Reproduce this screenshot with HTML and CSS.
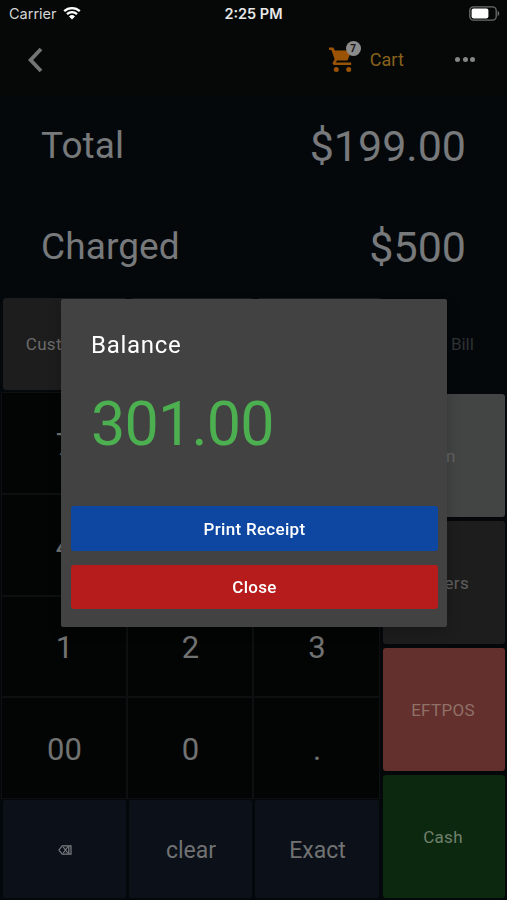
FILE: index.html
```
<!DOCTYPE html>
<html lang="en">
<head>
    <meta charset="UTF-8">
    <meta name="viewport" content="width=device-width, initial-scale=1.0">
    <title>Payment</title>
    <link rel="stylesheet" href="styles.css">
</head>
<body>

    <div class="status-bar">
        <div class="carrier">
            <span>Carrier</span>
            <svg class="wifi" viewBox="0 0 18 14" width="18" height="14">
                <path d="M1.2 5.2a11.2 11.2 0 0 1 15.6 0M4 8.2a7.2 7.2 0 0 1 10 0" fill="none" stroke="#fff" stroke-width="2.3"/>
                <path d="M9 13.6l-3-3.2a4.3 4.3 0 0 1 6 0z" fill="#fff"/>
            </svg>
        </div>
        <span class="clock">2:25 PM</span>
        <svg class="battery" viewBox="0 0 31 15" width="31" height="15">
            <rect x="0.8" y="0.8" width="26.4" height="13.4" rx="3.6" fill="none" stroke="#6c6d6d" stroke-width="1.3"/>
            <rect x="2.6" y="2.6" width="16.8" height="9.8" rx="1.8" fill="#fff"/>
            <path d="M28.6 4.8c2.2 1 2.2 4.4 0 5.4z" fill="#6c6d6d"/>
        </svg>
    </div>

    <header>
        <svg class="back" viewBox="0 0 16 26" width="16" height="26">
            <path d="M14 2L3.6 13 14 24" fill="none" stroke="#747474" stroke-width="3.8"/>
        </svg>
        <div class="cart">
            <div class="cart-icon">
                <svg viewBox="0 0 24 26" width="24" height="26">
                    <path d="M0 .4h4.4l1.500 3H22.500l-4 10.200H8l-1.100 2h15.300v2.500H5.600c-1.800 0-2.500-1.500-1.600-3l1.600-2.900L2.400 3H0z" fill="#9a5204"/>
                    <circle cx="7.3" cy="22.600" r="2.500" fill="#9a5204"/>
                    <circle cx="19.700" cy="22.600" r="2.500" fill="#9a5204"/>
                </svg>
                <span class="badge">7</span>
            </div>
            <span class="cart-label">Cart</span>
        </div>
        <div class="more"><i></i><i></i><i></i></div>
    </header>

    <div class="amounts">
        <div class="amount-row">
            <span class="amount-label">Total</span>
            <span class="amount-value">$199.00</span>
        </div>
        <div class="amount-row">
            <span class="amount-label charged">Charged</span>
            <span class="amount-value">$500</span>
        </div>
    </div>

    <div class="options">
        <div class="option">Customer</div>
        <div class="option"></div>
        <div class="option"></div>
        <div class="option option-off">Print Bill</div>
    </div>

    <div class="pay">
        <div class="keypad">
            <div class="key">7</div>
            <div class="key">8</div>
            <div class="key">9</div>
            <div class="key">4</div>
            <div class="key">5</div>
            <div class="key">6</div>
            <div class="key">1</div>
            <div class="key">2</div>
            <div class="key">3</div>
            <div class="key">00</div>
            <div class="key">0</div>
            <div class="key">.</div>
            <div class="key action">
                <svg viewBox="0 0 14 10" width="14" height="10">
                    <path d="M.9 5L4.200 .800H13v8.400H4.200zM5.200 2l4.500 6M9.700 2L5.200 8M10.800 1v8" fill="none" stroke="#7c7e82" stroke-width="1.200"/>
                </svg>
            </div>
            <div class="key action">clear</div>
            <div class="key action">Exact</div>
        </div>
        <div class="methods">
            <div class="method pin">Pin</div>
            <div class="method others">Others</div>
            <div class="method eftpos">EFTPOS</div>
            <div class="method cash">Cash</div>
        </div>
    </div>

    <div class="modal">
        <div class="modal-content">
            <div class="modal-title">Balance</div>
            <div class="balance">301.00</div>
            <button class="print">Print Receipt</button>
            <button class="close">Close</button>
        </div>
    </div>

</body>
</html>
```

FILE: styles.css
```
* {
    box-sizing: border-box;
}
body {
    margin: 0;
    height: 900px;
    overflow: hidden;
    background-color: #04080b;
    color: #77797b;
    font-family: Roboto, "Liberation Sans", sans-serif;
}

/* top bars */
.status-bar {
    display: grid;
    grid-template-columns: 1fr auto 1fr;
    align-items: center;
    height: 28px;
    padding: 0 7px 2px 9px;
    background-color: #050807;
    color: #e8e8e8;
    font-family: Inter, sans-serif;
    font-size: 14.5px;
}
.carrier {
    display: flex;
    align-items: center;
    gap: 6px;
    color: #d4d4d4;
}
.clock {
    margin-left: -2px;
    font-weight: 600;
}
.battery {
    justify-self: end;
}
header {
    display: flex;
    align-items: center;
    height: 67px;
    padding: 0 32px 4px 27px;
    background-color: #050807;
}
.cart {
    display: flex;
    align-items: center;
    margin-left: auto;
    gap: 17px;
}
.cart-icon {
    position: relative;
    height: 26px;
}
.badge {
    position: absolute;
    left: 17px;
    top: -6px;
    width: 15px;
    height: 15px;
    border-radius: 50%;
    background-color: #8b8b8b;
    color: #161616;
    font-size: 10px;
    font-weight: bold;
    line-height: 15px;
    text-align: center;
}
.cart-label {
    color: #88621d;
    font-size: 18px;
    letter-spacing: 0.1px;
}
.more {
    display: flex;
    gap: 2.500px;
    margin-left: 51px;
}
.more i {
    width: 5px;
    height: 5px;
    border-radius: 50%;
    background-color: #858585;
}

/* totals */
.amounts {
    height: 203px;
}
.amount-row {
    display: flex;
    align-items: center;
    justify-content: space-between;
    height: 101px;
    padding: 0 41px;
}
.amount-label {
    font-size: 37px;
    letter-spacing: 0.1px;
}
.amount-value {
    font-size: 43px;
}

/* option row above the keypad */
.options {
    display: grid;
    grid-template-columns: 124px 124px 124px 122px;
    column-gap: 3px;
    height: 92px;
    padding-left: 3px;
}
.option {
    display: flex;
    align-items: center;
    justify-content: center;
    padding-right: 2px;
    border-radius: 3px;
    background-color: #1d1d1d;
    color: #6c6c6c;
    font-size: 17px;
    letter-spacing: 0.3px;
}
.option-off {
    padding-right: 8px;
    background-color: transparent;
    color: #303234;
    letter-spacing: 0;
    word-spacing: 3px;
}

/* keypad and payment methods */
.pay {
    display: flex;
    gap: 2px;
    height: 510px;
}
.keypad {
    display: grid;
    grid-template-columns: 126px 126px 127px;
    grid-template-rows: 102px 102px 101px 102px 99px;
    width: 381px;
    padding: 2px 0 0 1px;
}
.key {
    display: flex;
    align-items: center;
    justify-content: center;
    padding: 2px 0 0 1px;
    border: 1px solid #0d1011;
    background-color: #030505;
    color: #717272;
    font-size: 31px;
}
.key.action {
    margin: 1px 1px 0 2px;
    border: 0;
    border-radius: 2px;
    background-color: #0b1019;
    font-size: 23px;
}
.methods {
    display: grid;
    grid-template-rows: repeat(4, 123px);
    row-gap: 4px;
    width: 122px;
    padding-top: 4px;
}
.method {
    display: flex;
    align-items: center;
    justify-content: center;
    padding-right: 2px;
    border-radius: 3px;
    font-size: 17px;
    letter-spacing: 0.3px;
}
.pin {
    background-color: #434444;
    color: #626363;
}
.others {
    background-color: #1d1d1d;
    color: #5f5f5f;
}
.eftpos {
    background-color: #64302d;
    color: #8f7168;
}
.cash {
    background-color: #0c290f;
    color: #71806d;
}

/* balance dialog */
.modal {
    position: fixed;
    z-index: 1;
    inset: 0;
    padding-top: 299px;
}
.modal-content {
    display: flex;
    flex-direction: column;
    width: 386px;
    height: 328px;
    margin-left: 61px;
    padding: 0 9px 0 10px;
    border-radius: 2px;
    background-color: #424242;
    box-shadow: 0 4px 14px rgba(0, 0, 0, 0.2);
}
.modal-title {
    padding: 30px 20px 0;
    color: #fff;
    font-size: 24px;
    line-height: 32px;
    letter-spacing: 0.7px;
}
.balance {
    height: 145px;
    padding: 27px 20px 0;
    color: #4caf50;
    font-size: 61px;
    line-height: 72px;
    letter-spacing: -0.8px;
}
.modal button {
    width: 367px;
    height: 45px;
    padding: 0;
    border: none;
    border-radius: 3px;
    color: #fff;
    font-family: inherit;
    font-size: 17px;
    font-weight: 500;
    letter-spacing: 0.3px;
}
.print {
    background-color: #0d47a1;
}
.modal .close {
    height: 44px;
    margin-top: 14px;
    background-color: #b71c1c;
}
```
